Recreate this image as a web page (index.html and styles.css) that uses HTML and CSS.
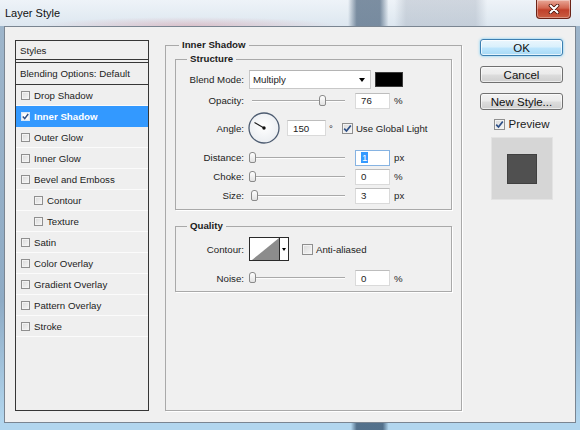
FILE: index.html
```html
<!DOCTYPE html>
<html>
<head>
<meta charset="utf-8">
<title>Layer Style</title>
<link rel="stylesheet" href="styles.css">
</head>
<body>
<div class="window">
  <div class="titlebar">
    <span class="title">Layer Style</span>
    <div class="close">
      <svg width="14" height="10" viewBox="0 0 14 10"><path d="M3.5 1.5 L10.5 8.5 M10.5 1.5 L3.5 8.5" stroke="#4a1208" stroke-width="3.6" stroke-linecap="round"/><path d="M3.5 1.5 L10.5 8.5 M10.5 1.5 L3.5 8.5" stroke="#fff" stroke-width="2" stroke-linecap="round"/></svg>
    </div>
  </div>
  <div class="client">
    <div class="styles-list">
      <div class="list-head">Styles</div>
      <div class="list-blend">Blending Options: Default</div>
      <div class="list-item"><span class="cb"></span>Drop Shadow</div>
      <div class="list-item selected"><span class="cb"><svg width="7" height="7" viewBox="0 0 7 7"><path d="M0.8 3.6 L2.7 5.6 L6.2 1" stroke="#2d4f86" stroke-width="1.5" fill="none"/></svg></span>Inner Shadow</div>
      <div class="list-item"><span class="cb"></span>Outer Glow</div>
      <div class="list-item"><span class="cb"></span>Inner Glow</div>
      <div class="list-item"><span class="cb"></span>Bevel and Emboss</div>
      <div class="list-item sub"><span class="cb"></span>Contour</div>
      <div class="list-item sub"><span class="cb"></span>Texture</div>
      <div class="list-item"><span class="cb"></span>Satin</div>
      <div class="list-item"><span class="cb"></span>Color Overlay</div>
      <div class="list-item"><span class="cb"></span>Gradient Overlay</div>
      <div class="list-item"><span class="cb"></span>Pattern Overlay</div>
      <div class="list-item"><span class="cb"></span>Stroke</div>
    </div>

    <fieldset class="panel">
      <legend>Inner Shadow</legend>
      <fieldset class="group structure">
        <legend>Structure</legend>
        <div class="row r-blend">
          <span class="lbl">Blend Mode:</span>
          <div class="select"><span>Multiply</span><span class="arrow"></span></div>
          <span class="swatch"></span>
        </div>
        <div class="row r-opacity">
          <span class="lbl">Opacity:</span>
          <div class="slider"><div class="track"><span class="thumb" style="left:76%"></span></div></div>
          <div class="num">76</div>
          <span class="unit">%</span>
        </div>
        <div class="row r-angle">
          <span class="lbl">Angle:</span>
          <svg class="dial" width="32" height="32" viewBox="0 0 32 32">
            <defs><radialGradient id="dg" cx="50%" cy="45%" r="60%"><stop offset="0" stop-color="#ffffff"/><stop offset="1" stop-color="#e9ecf0"/></radialGradient></defs>
            <circle cx="16" cy="16" r="15" fill="url(#dg)" stroke="#4c5b70" stroke-width="1.3"/>
            <path d="M16 16 L6.5 10.5" stroke="#1a1a1a" stroke-width="1.1"/>
            <circle cx="16" cy="16" r="1.7" fill="#111"/>
          </svg>
          <div class="num angle">150</div>
          <span class="deg">°</span>
          <span class="cb global"><svg width="9" height="9" viewBox="0 0 9 9"><path d="M1.2 4.6 L3.5 7 L7.8 1.4" stroke="#2d4f86" stroke-width="1.7" fill="none"/></svg></span>
          <span class="cb-text">Use Global Light</span>
        </div>
        <div class="row r-slider r-distance">
          <span class="lbl">Distance:</span>
          <div class="slider"><div class="track"><span class="thumb" style="left:1%"></span></div></div>
          <div class="num focus"><span class="sel">1</span></div>
          <span class="unit">px</span>
        </div>
        <div class="row r-slider">
          <span class="lbl">Choke:</span>
          <div class="slider"><div class="track"><span class="thumb" style="left:1%"></span></div></div>
          <div class="num">0</div>
          <span class="unit">%</span>
        </div>
        <div class="row r-slider">
          <span class="lbl">Size:</span>
          <div class="slider"><div class="track"><span class="thumb" style="left:3%"></span></div></div>
          <div class="num">3</div>
          <span class="unit">px</span>
        </div>
      </fieldset>

      <fieldset class="group quality">
        <legend>Quality</legend>
        <div class="row r-contour">
          <span class="lbl">Contour:</span>
          <div class="contour">
            <svg width="29" height="22" viewBox="0 0 29 22"><rect width="29" height="22" fill="#fff"/><polygon points="2,22 29,0 29,22" fill="#8c8c8c"/></svg>
            <span class="drop"><span class="mini-arrow"></span></span>
          </div>
          <span class="cb anti"></span>
          <span class="cb-text">Anti-aliased</span>
        </div>
        <div class="row r-noise">
          <span class="lbl">Noise:</span>
          <div class="slider"><div class="track"><span class="thumb" style="left:1%"></span></div></div>
          <div class="num">0</div>
          <span class="unit">%</span>
        </div>
      </fieldset>
    </fieldset>

    <div class="actions">
      <div class="btn ok">OK</div>
      <div class="btn">Cancel</div>
      <div class="btn">New Style...</div>
      <div class="preview">
        <span class="cb"><svg width="9" height="9" viewBox="0 0 9 9"><path d="M1.2 4.6 L3.5 7 L7.8 1.4" stroke="#2d4f86" stroke-width="1.7" fill="none"/></svg></span>
        <span>Preview</span>
      </div>
      <div class="swatch-box"><span></span></div>
    </div>
  </div>
</div>
</body>
</html>
```

FILE: styles.css
```css
* { box-sizing: border-box; }
html, body { margin: 0; padding: 0; }
body {
  width: 580px;
  height: 430px;
  overflow: hidden;
  font-family: "Liberation Sans", Arial, sans-serif;
  font-size: 9.7px;
  color: #1c1c1c;
}

.window {
  width: 580px;
  height: 430px;
  display: flex;
  flex-direction: column;
  background:
    linear-gradient(90deg, transparent 60.5%, rgba(60, 88, 115, .8) 61.5%, rgba(60, 88, 115, .8) 66%, transparent 67%) bottom / 100% 7px no-repeat,
    linear-gradient(to bottom, #9fb6cb 0%, #8eabc5 70%, #b2d6ee 98%);
}

/* title bar */
.titlebar {
  height: 26px;
  flex: none;
  display: flex;
  align-items: flex-start;
  background:
    linear-gradient(90deg, transparent 60%, rgba(85, 108, 132, .75) 61.5%, rgba(85, 108, 132, .75) 65.5%, transparent 67%),
    linear-gradient(90deg, transparent 68%, rgba(150, 160, 175, .35) 70%, rgba(150, 160, 175, .35) 82%, transparent 84%),
    radial-gradient(ellipse 150px 9px at 190px 26px, rgba(215, 155, 165, .5), transparent),
    linear-gradient(to bottom, #eef3f8, #dde7f0);
}
.title {
  line-height: 26px;
  padding-left: 5px;
  font-size: 11px;
  color: #111;
}
.close {
  margin-left: auto;
  margin-right: 9px;
  width: 35px;
  height: 19px;
  border: 1px solid #6b2317;
  border-top: none;
  border-radius: 0 0 4px 4px;
  background: linear-gradient(#e9a898, #d2654f 45%, #c0402a 55%, #c95e42);
  box-shadow: inset 0 0 0 1px rgba(255, 255, 255, .35);
  display: flex;
  align-items: center;
  justify-content: center;
}
.close svg { display: block; }

/* client area */
.client {
  height: 397px;
  flex: none;
  margin: 0 4px;
  border: 1px solid #7a8591;
  background: #f0f0f0;
  display: flex;
  align-items: flex-start;
  padding: 13px 12px 0 10px;
}

/* styles list */
.styles-list {
  width: 134px;
  height: 371px;
  flex: none;
  border: 1px solid #363636;
  background: #efefef;
  display: flex;
  flex-direction: column;
}
.list-head {
  height: 19px;
  padding-left: 4px;
  display: flex;
  align-items: center;
  border-bottom: 1px solid #363636;
}
.list-blend {
  margin-top: 2px;
  height: 23px;
  padding-left: 4px;
  display: flex;
  align-items: center;
  border-top: 1px solid #363636;
  border-bottom: 1px solid #363636;
}
.list-item {
  height: 21px;
  padding-left: 5px;
  display: flex;
  align-items: center;
  border-bottom: 1px solid #fbfbfb;
}
.list-item.sub { padding-left: 18px; }
.list-item.selected {
  background: #3399ff;
  color: #fff;
  font-weight: bold;
  border-bottom-color: #3399ff;
}
.list-item .cb {
  width: 9px;
  height: 9px;
  margin-right: 4px;
}
.list-item.selected .cb {
  background: #fff;
  border-color: #d8e8f8;
}

/* checkbox */
.cb {
  width: 11px;
  height: 11px;
  flex: none;
  border: 1px solid #8f8f8f;
  background: linear-gradient(135deg, #d9d9d9, #f7f7f7);
  box-shadow: inset 0 0 0 1px #f3f3f3;
  display: flex;
  align-items: center;
  justify-content: center;
}
.cb svg { display: block; }
.cb-text { margin-left: 3px; }

/* fieldsets */
fieldset {
  margin: 0;
  min-width: 0;
  border: 1px solid #a9a9a9;
  box-shadow: 1px 1px 0 #fff;
}
legend {
  font-weight: bold;
  line-height: 12px;
  padding: 0 3px;
}
.panel {
  width: 297px;
  height: 372px;
  flex: none;
  margin: -1px 18px 0 16px;
  padding: 0 9px;
}
.panel > legend { margin-left: 4px; }
.group { padding: 4px 0 4px; }
.group > legend { margin-left: 11px; }
.structure { margin-top: 2px; }
.quality { margin-top: 10px; }

/* rows */
.row { display: flex; align-items: center; }
.lbl {
  width: 68px;
  margin-right: 5px;
  text-align: right;
  flex: none;
}
.r-blend, .r-opacity { height: 21px; }
.r-angle { height: 34px; margin-bottom: 3px; }
.r-slider { height: 19px; }
.r-contour { height: 26px; }
.r-noise { height: 18px; margin-top: 7px; }

.select {
  width: 122px;
  height: 19px;
  flex: none;
  background: #fff;
  border: 1px solid #c8c8c8;
  border-top-color: #b4b4b4;
  display: flex;
  align-items: center;
  padding-left: 3px;
}
.select .arrow {
  margin-left: auto;
  margin-right: 5px;
  border-left: 3.5px solid transparent;
  border-right: 3.5px solid transparent;
  border-top: 4px solid #000;
}
.swatch {
  width: 28px;
  height: 15px;
  margin-left: 4px;
  background: #000;
  border: 1px solid #3c3c3c;
}

.slider {
  position: relative;
  width: 100px;
  height: 14px;
  flex: none;
}
.track {
  position: absolute;
  left: 3px;
  right: 4px;
  top: 6px;
  height: 2px;
  border-top: 1px solid #a9a9a9;
  border-bottom: 1px solid #fdfdfd;
}
.thumb {
  position: absolute;
  top: -6px;
  width: 7px;
  height: 11px;
  margin-left: -3.5px;
  border: 1px solid #8a8a8a;
  border-radius: 3px 3px 2px 2px;
  background: linear-gradient(#ffffff, #e2e2e2);
}

.num {
  width: 35px;
  height: 16px;
  flex: none;
  margin-left: 6px;
  background: #fff;
  border: 1px solid #dadada;
  border-top-color: #bdbdbd;
  padding-left: 5px;
  display: flex;
  align-items: center;
}
.num.focus { border-color: #86b3e2; }
.sel { background: #3399ff; color: #fff; padding: 0 1px; }
.unit { margin-left: 4px; }

.dial { display: block; flex: none; margin-left: -1px; }
.num.angle { width: 39px; margin-left: 7px; }
.deg { margin-left: 3px; }
.cb.global { margin-left: 9px; }

.contour {
  width: 40px;
  height: 24px;
  flex: none;
  border: 1px solid #2a2a2a;
  background: #fff;
  display: flex;
}
.contour svg { display: block; }
.contour .drop {
  width: 9px;
  border-left: 1px solid #2a2a2a;
  display: flex;
  align-items: center;
  justify-content: center;
}
.mini-arrow {
  border-left: 2.5px solid transparent;
  border-right: 2.5px solid transparent;
  border-top: 3px solid #000;
}
.cb.anti { margin-left: 13px; }

/* right column */
.actions {
  width: 83px;
  flex: none;
  margin-top: -1px;
  display: flex;
  flex-direction: column;
  align-items: center;
  font-size: 11.5px;
}
.btn {
  width: 83px;
  height: 17px;
  border: 1px solid #707070;
  border-radius: 3px;
  background: linear-gradient(#f2f2f2 0, #ebebeb 48%, #dddddd 52%, #cfcfcf 100%);
  box-shadow: inset 0 0 0 1px rgba(255, 255, 255, .6);
  display: flex;
  align-items: center;
  justify-content: center;
  color: #111;
}
.btn + .btn { margin-top: 10px; }
.btn.ok {
  border-color: #3c7fb1;
  background: linear-gradient(#eaf6fd 0, #d9f0fc 48%, #bee6fd 52%, #a7d9f5 100%);
  box-shadow: 0 0 3px #6cc9f5, inset 0 0 0 1px rgba(255, 255, 255, .7);
}
.preview {
  margin-top: 8px;
  height: 12px;
  display: flex;
  align-items: center;
}
.preview .cb { margin-right: 4px; }
.swatch-box {
  margin-top: 7px;
  width: 62px;
  height: 63px;
  background: #d6d6d6;
  border: 1px solid #e3e3e3;
  display: flex;
  align-items: center;
  justify-content: center;
}
.swatch-box span {
  width: 30px;
  height: 30px;
  background: #505050;
  border: 1px solid #404040;
}
```
